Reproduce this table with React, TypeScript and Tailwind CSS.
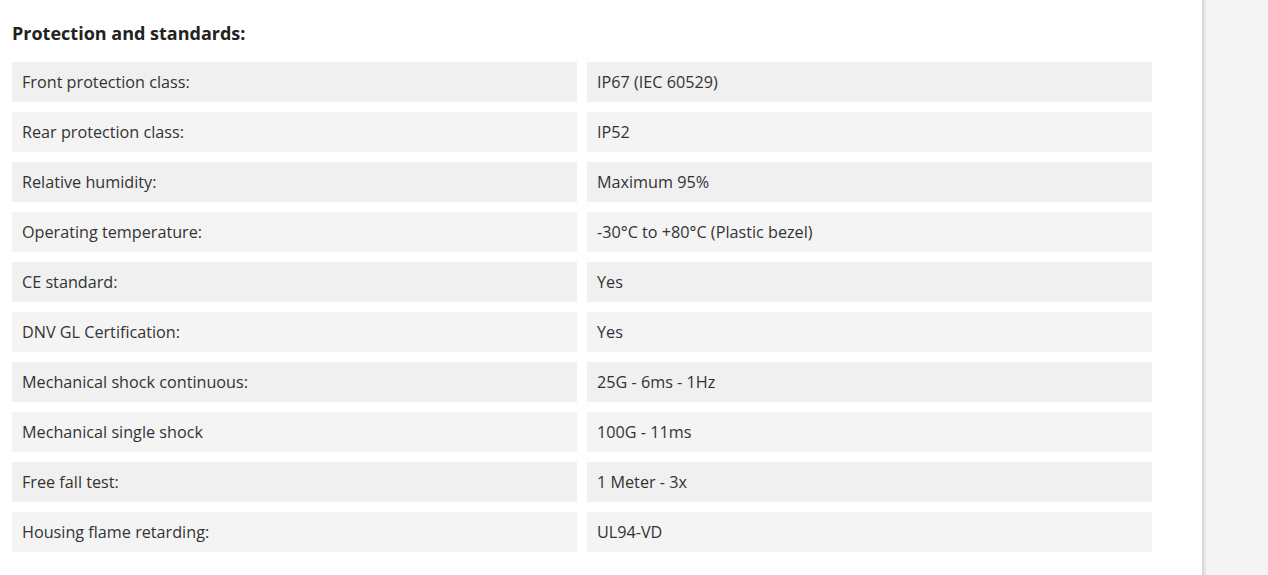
import React from "react";

const rows: [string, string][] = [
  ["Front protection class:", "IP67 (IEC 60529)"],
  ["Rear protection class:", "IP52"],
  ["Relative humidity:", "Maximum 95%"],
  ["Operating temperature:", "-30°C to +80°C (Plastic bezel)"],
  ["CE standard:", "Yes"],
  ["DNV GL Certification:", "Yes"],
  ["Mechanical shock continuous:", "25G - 6ms - 1Hz"],
  ["Mechanical single shock", "100G - 11ms"],
  ["Free fall test:", "1 Meter - 3x"],
  ["Housing flame retarding:", "UL94-VD"],
];

export default function App() {
  return (
    <div className="flex h-[575px] w-[1268px] overflow-hidden bg-white" style={{ fontFamily: '"Open Sans", "Noto Sans", sans-serif' }}>
      <div className="w-[1202px] shrink-0 pl-3 pt-[21px]">
        <h2 className="text-[18px] font-bold leading-6 text-[#222]">Protection and standards:</h2>
        <div className="mt-[17px] flex w-[1140px] flex-col gap-[10px]">
          {rows.map(([k, v], i) => (
            <div key={k} className="flex gap-[10px]">
              <div className={`flex h-10 flex-1 items-center px-[10px] text-[16.2px] text-[#333] ${i % 2 === 0 ? "bg-[#f0f0f0]" : "bg-[#f4f4f4]"}`}>{k}</div>
              <div className={`flex h-10 flex-1 items-center px-[10px] text-[16.2px] text-[#333] ${i % 2 === 0 ? "bg-[#f0f0f0]" : "bg-[#f4f4f4]"}`}>{v}</div>
            </div>
          ))}
        </div>
      </div>
      <div className="flex flex-1">
        <div className="w-[2px] bg-[#d9d9d9]" />
        <div className="w-[2px] bg-[#e8e8e8]" />
        <div className="flex-1 bg-[#f4f4f4]" />
      </div>
    </div>
  );
}
